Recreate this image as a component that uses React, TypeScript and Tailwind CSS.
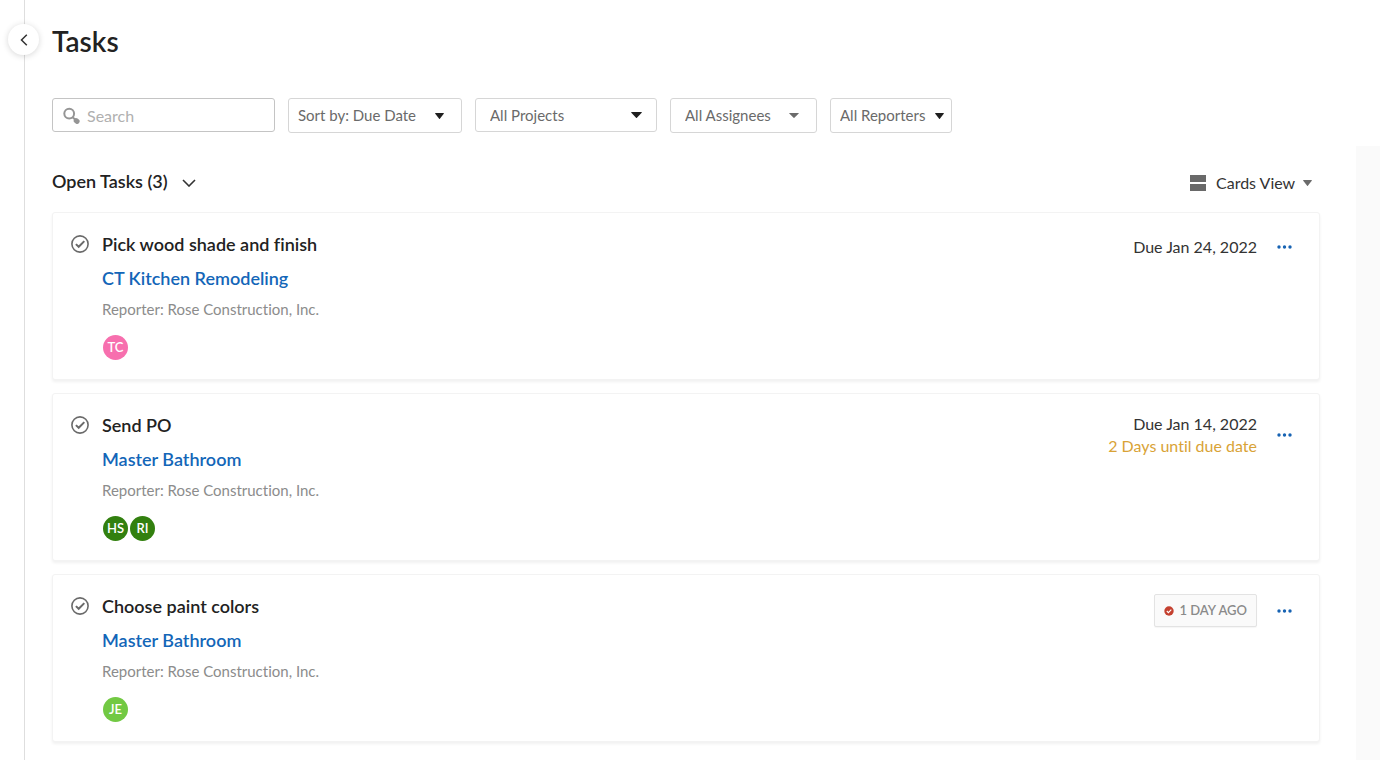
import { useState } from 'react';
import clsx from 'clsx';

type Assignee = {
  initials: string;
  color: string;
};

type Task = {
  id: number;
  title: string;
  project: string;
  reporter: string;
  assignees: Assignee[];
  due?: string;
  warning?: string;
  overdue?: string;
};

const tasks: Task[] = [
  {
    id: 1,
    title: 'Pick wood shade and finish',
    project: 'CT Kitchen Remodeling',
    reporter: 'Rose Construction, Inc.',
    assignees: [{ initials: 'TC', color: 'bg-[#f76fae]' }],
    due: 'Due Jan 24, 2022',
  },
  {
    id: 2,
    title: 'Send PO',
    project: 'Master Bathroom',
    reporter: 'Rose Construction, Inc.',
    assignees: [
      { initials: 'HS', color: 'bg-[#32800f]' },
      { initials: 'RI', color: 'bg-[#32800f]' },
    ],
    due: 'Due Jan 14, 2022',
    warning: '2 Days until due date',
  },
  {
    id: 3,
    title: 'Choose paint colors',
    project: 'Master Bathroom',
    reporter: 'Rose Construction, Inc.',
    assignees: [{ initials: 'JE', color: 'bg-[#72c943]' }],
    overdue: '1 DAY AGO',
  },
];

const filters = [
  { label: 'Sort by: Due Date', size: 'w-[174px] h-[35px]', pad: 'pl-[9px]', arrow: 'right-[18px] w-[9px] h-[6px] text-[#1f1f1f]' },
  { label: 'All Projects', size: 'w-[182px] h-[34px]', pad: 'pl-[14px]', arrow: 'right-[15px] w-[11px] h-[6px] text-[#1f1f1f]' },
  { label: 'All Assignees', size: 'w-[147px] h-[35px]', pad: 'pl-[14px]', arrow: 'right-[18px] w-[10px] h-[5px] text-[#6b6b6b]' },
  { label: 'All Reporters', size: 'w-[122px] h-[35px]', pad: 'pl-[9px]', arrow: 'right-[8px] w-[9px] h-[6px] text-[#1f1f1f]' },
];

const Caret = ({ className }: { className?: string }) => (
  <svg viewBox="0 0 10 6" preserveAspectRatio="none" fill="currentColor" className={className} aria-hidden="true">
    <path d="M0.6 0h8.8q0.8 0 0.3 0.7L5.4 5.7q-0.4 0.4-0.8 0L0.3 0.7Q-0.2 0 0.6 0z" />
  </svg>
);

const SearchIcon = () => (
  <svg viewBox="0 0 18 18" className="w-[18px] h-[18px] shrink-0 text-[#959595]" fill="none" stroke="currentColor" aria-hidden="true">
    <circle cx="6.2" cy="6.6" r="4.9" strokeWidth="2" />
    <path d="M9.8 10.4l2.6 2.4" strokeWidth="2" />
    <path d="M13.2 13.7l0.9 0.6" strokeWidth="5" strokeLinecap="round" />
  </svg>
);

const CheckIcon = () => (
  <svg viewBox="0 0 18 18" className="w-[18px] h-[18px]" fill="none" stroke="#6a6a6a" aria-hidden="true">
    <circle cx="9" cy="9" r="8.1" strokeWidth="1.6" />
    <path d="M4.9 9.1l2.8 2.7 5.6-5.7" strokeWidth="2" />
  </svg>
);

const OverdueIcon = () => (
  <svg viewBox="0 0 10 10" className="w-[10px] h-[10px]" fill="none" aria-hidden="true">
    <circle cx="5" cy="5" r="4.7" fill="#c4402f" />
    <path d="M2.8 5l1.6 1.6 2.9-3" stroke="#fff" strokeWidth="1.1" />
  </svg>
);

const TaskCard = ({ task }: { task: Task }) => (
  <li className="flex items-start rounded-[3px] border border-[#f3f3f3] bg-white pt-[19px] pb-[19px] pl-[18px] pr-[27px] shadow-[0_2px_3px_rgba(0,0,0,0.06)]">
    <button type="button" aria-label={`Complete ${task.title}`} className="flex h-6 items-center">
      <CheckIcon />
    </button>
    <div className="ml-[13px] flex-1">
      <h3 className="text-lg leading-6 font-semibold text-[#222]">{task.title}</h3>
      <a href="#project" className="mt-[10px] block w-fit text-lg leading-6 font-semibold text-[#1366b8]">
        {task.project}
      </a>
      <p className="mt-[9px] text-[15px] leading-5 text-[#8c8c8c]">Reporter: {task.reporter}</p>
      <div className="mt-4 ml-px flex gap-[2px]">
        {task.assignees.map((person) => (
          <span
            key={person.initials}
            className={clsx(
              'flex h-[25px] w-[25px] items-center justify-center rounded-full text-[13px] leading-none font-semibold text-white',
              person.color
            )}
          >
            {person.initials}
          </span>
        ))}
      </div>
    </div>
    <div className="flex min-h-[30px] items-center gap-5">
      {task.overdue ? (
        <span className="flex h-[33px] items-center gap-[5px] rounded-[2px] border border-[#e3e3e3] bg-[#fafafa] px-[9px] text-[13px] font-semibold text-[#8a8a8a] shadow-[0_1px_1px_rgba(0,0,0,0.04)]">
          <OverdueIcon />
          {task.overdue}
        </span>
      ) : (
        <div className="text-right text-base leading-[22px] text-[#333]">
          <p>{task.due}</p>
          {task.warning && <p className="text-[#d9a336]">{task.warning}</p>}
        </div>
      )}
      <button type="button" aria-label="More actions" className="flex h-6 items-center">
        <svg viewBox="0 0 15 4" className="h-[4px] w-[15px]" fill="#1763b3" aria-hidden="true">
          <circle cx="2" cy="2" r="1.7" />
          <circle cx="7.5" cy="2" r="1.7" />
          <circle cx="13" cy="2" r="1.7" />
        </svg>
      </button>
    </div>
  </li>
);

const App = () => {
  const [open, setOpen] = useState(true);
  const [query, setQuery] = useState('');

  const visible = tasks.filter((task) => task.title.toLowerCase().includes(query.toLowerCase()));

  return (
    <div className="flex min-h-screen bg-white font-['Lato','Open_Sans',sans-serif] text-[#222] [font-variant-ligatures:none]">
      {/* Collapsed sidebar */}
      <aside className="relative w-[25px] shrink-0 border-r border-[#dedede]">
        <button
          type="button"
          aria-label="Expand sidebar"
          className="absolute top-6 left-2 flex h-[31px] w-[31px] items-center justify-center rounded-full bg-white shadow-[0_1px_6px_rgba(0,0,0,0.16)]"
        >
          <svg viewBox="0 0 8 12" className="h-3 w-2" fill="none" stroke="#333" strokeWidth="1.5" aria-hidden="true">
            <path d="M6.8 0.8L1.5 6l5.3 5.2" />
          </svg>
        </button>
      </aside>

      <main className="flex min-w-0 flex-1 flex-col">
        <header className="px-[27px] pt-[25px] pb-[13px]">
          <h1 className="text-[28px] leading-8 font-semibold">Tasks</h1>
          <div className="mt-[41px] flex items-start gap-[13px]">
            <label className="flex h-[34px] w-[223px] items-center gap-[6px] rounded-[3px] border border-[#c4c4c4] pt-[2px] pl-[10px]">
              <SearchIcon />
              <input
                type="search"
                aria-label="Search"
                placeholder="Search"
                value={query}
                onChange={(e) => setQuery(e.target.value)}
                className="w-full min-w-0 bg-transparent text-base leading-5 outline-none placeholder:text-[#b0b0b0]"
              />
            </label>
            {filters.map((filter) => (
              <div key={filter.label} className={clsx('relative', filter.size)}>
                <select
                  aria-label={filter.label}
                  className={clsx(
                    'h-full w-full appearance-none rounded-[3px] border border-[#d6d6d6] bg-white text-[15px] text-[#6a6a6a]',
                    filter.pad
                  )}
                >
                  <option>{filter.label}</option>
                </select>
                <Caret className={clsx('pointer-events-none absolute inset-y-0 my-auto', filter.arrow)} />
              </div>
            ))}
          </div>
        </header>

        <div className="flex flex-1">
          <section className="min-w-0 flex-1 pr-9 pl-[27px]">
            <div className="flex h-[66px] items-center justify-between pr-2">
              <button type="button" onClick={() => setOpen(!open)} className="flex items-center gap-[14px] pt-1">
                <h2 className="text-lg leading-6 font-semibold">Open Tasks (3)</h2>
                <svg viewBox="0 0 14 8" className="mt-1 h-2 w-[14px]" fill="none" stroke="#333" strokeWidth="1.6" aria-hidden="true">
                  <path d="M1 1l6 6 6-6" />
                </svg>
              </button>
              <div className="relative mt-2 flex items-center gap-[10px]">
                <svg viewBox="0 0 16 16" className="h-4 w-4" fill="#696969" aria-hidden="true">
                  <path d="M0 0h16v7H0zM0 9h16v7H0z" />
                </svg>
                <select aria-label="View" className="appearance-none bg-transparent pr-4 text-base leading-5 text-[#333]">
                  <option>Cards View</option>
                </select>
                <Caret className="pointer-events-none absolute inset-y-0 right-0 my-auto h-[6px] w-[9px] text-[#6b6b6b]" />
              </div>
            </div>

            {open && (
              <ul className="flex flex-col gap-[13px]">
                {visible.map((task) => (
                  <TaskCard key={task.id} task={task} />
                ))}
              </ul>
            )}
          </section>
          <div className="w-6 shrink-0 bg-[#fafafa]"></div>
        </div>
      </main>
    </div>
  );
};

export default App;
